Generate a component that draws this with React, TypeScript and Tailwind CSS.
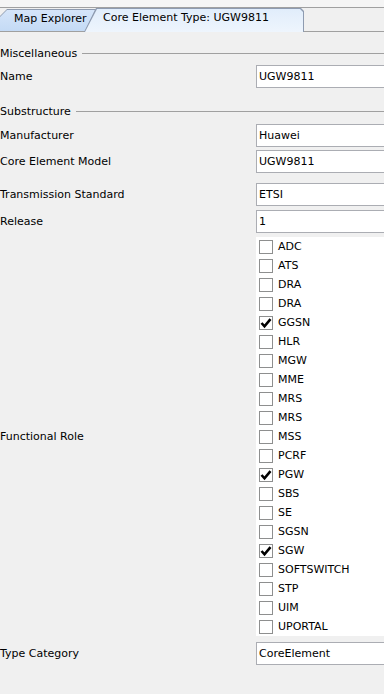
import React from 'react';

const roles: { name: string; checked: boolean }[] = [
  { name: 'ADC', checked: false },
  { name: 'ATS', checked: false },
  { name: 'DRA', checked: false },
  { name: 'DRA', checked: false },
  { name: 'GGSN', checked: true },
  { name: 'HLR', checked: false },
  { name: 'MGW', checked: false },
  { name: 'MME', checked: false },
  { name: 'MRS', checked: false },
  { name: 'MRS', checked: false },
  { name: 'MSS', checked: false },
  { name: 'PCRF', checked: false },
  { name: 'PGW', checked: true },
  { name: 'SBS', checked: false },
  { name: 'SE', checked: false },
  { name: 'SGSN', checked: false },
  { name: 'SGW', checked: true },
  { name: 'SOFTSWITCH', checked: false },
  { name: 'STP', checked: false },
  { name: 'UIM', checked: false },
  { name: 'UPORTAL', checked: false },
];

const SectionHeader: React.FC<{ title: string }> = ({ title }) => (
  <div className="flex h-[14px] items-center">
    <span className="whitespace-nowrap">{title}</span>
    <div className="ml-[5px] h-px flex-1 bg-[#a0a0a0]" />
  </div>
);

const FieldRow: React.FC<{ label: string; value: string; className?: string }> = ({
  label,
  value,
  className = '',
}) => (
  <div className={`flex h-[23px] items-center ${className}`}>
    <span className="w-[256px] shrink-0 whitespace-nowrap">{label}</span>
    <div className="flex h-full w-[140px] shrink-0 items-center border border-[#abadb3] bg-white pl-[2px]">
      {value}
    </div>
  </div>
);

const CheckBox: React.FC<{ checked: boolean }> = ({ checked }) => (
  <div className="flex h-[14px] w-[14px] shrink-0 items-center justify-center border border-[#8e8f8f] bg-white">
    {checked && (
      <svg width="12" height="12" viewBox="0 0 12 12">
        <polyline points="1.5,6 4.5,9.3 10.5,2.2" fill="none" stroke="#000" strokeWidth="2.6" />
      </svg>
    )}
  </div>
);

const TabStrip: React.FC = () => (
  <div>
    <div className="h-[8px] border-b border-[#a0a0a0] bg-[#f5f5f5]" />
    <div className="flex h-[24px] items-end border-b border-[#a0a0a0] bg-[#f0f0f0]">
      <div className="h-[22px] w-[96px] shrink-0 bg-[#8e9bb0] [clip-path:polygon(0_7px,7px_0,100%_0,86px_100%,0_100%)]">
        <div className="mt-px h-[21px] w-[95px] whitespace-nowrap bg-gradient-to-b from-[#d5e5f9] to-[#c4daf5] pl-[14px] pt-[3px] [clip-path:polygon(0_7px,7px_0,100%_0,85px_100%,0_100%)]">
          Map Explorer
        </div>
      </div>
      <div className="relative z-10 -mb-px -ml-[12px] h-[24px] w-[220px] shrink-0 bg-[#8e9bb0] [clip-path:polygon(12px_0,calc(100%-3px)_0,100%_3px,100%_100%,0_100%)]">
        <div className="ml-px mt-px h-[23px] w-[218px] whitespace-nowrap bg-gradient-to-b from-[#e1edfb] to-[#eef5fd] pl-[18px] pt-[3px] [clip-path:polygon(12px_0,calc(100%-3px)_0,100%_3px,100%_100%,0_100%)]">
          Core Element Type: UGW9811
        </div>
      </div>
    </div>
  </div>
);

export default function App() {
  return (
    <div className="h-[694px] w-[384px] overflow-hidden bg-[#f0f0f0] font-['DejaVu_Sans',sans-serif] text-[11px] leading-none text-black">
      <TabStrip />
      <div className="flex flex-col pt-[14px]">
        <SectionHeader title="Miscellaneous" />
        <FieldRow label="Name" value="UGW9811" className="mt-[5px]" />
        <div className="mt-[16px]">
          <SectionHeader title="Substructure" />
        </div>
        <FieldRow label="Manufacturer" value="Huawei" className="mt-[6px]" />
        <FieldRow label="Core Element Model" value="UGW9811" className="mt-[3px]" />
        <FieldRow label="Transmission Standard" value="ETSI" className="mt-[10px]" />
        <FieldRow label="Release" value="1" className="mt-[4px]" />
        <div className="mt-[4px] flex items-center">
          <span className="w-[256px] shrink-0 whitespace-nowrap">Functional Role</span>
          <div className="flex w-[140px] shrink-0 flex-col bg-white">
            {roles.map((r, i) => (
              <div key={i} className="flex h-[19px] items-center pl-[3px]">
                <CheckBox checked={r.checked} />
                <span className="ml-[5px] whitespace-nowrap">{r.name}</span>
              </div>
            ))}
          </div>
        </div>
        <FieldRow label="Type Category" value="CoreElement" className="mt-[6px]" />
      </div>
    </div>
  );
}
